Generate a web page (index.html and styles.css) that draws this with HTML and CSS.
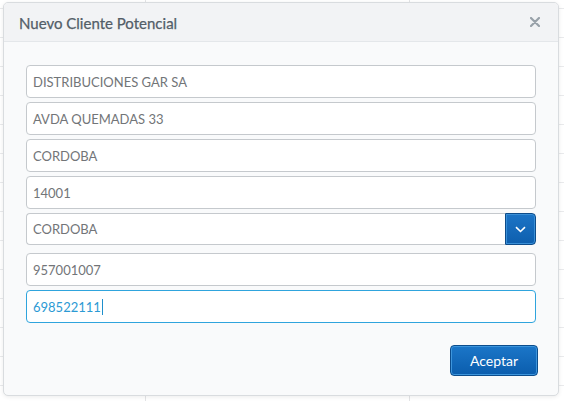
FILE: index.html
```html
<!DOCTYPE html>
<html lang="es">
<head>
<meta charset="utf-8">
<title>Nuevo Cliente Potencial</title>
<link rel="stylesheet" href="styles.css">
</head>
<body>
<div class="page">
  <div class="grid">
    <div class="row"><span class="c1"></span><span class="c2"></span><span class="c3"></span></div>
    <div class="row"><span class="c1"></span><span class="c2"></span><span class="c3"></span></div>
    <div class="row"><span class="c1"></span><span class="c2"></span><span class="c3"></span></div>
    <div class="row"><span class="c1"></span><span class="c2"></span><span class="c3"></span></div>
    <div class="row"><span class="c1"></span><span class="c2"></span><span class="c3"></span></div>
    <div class="row"><span class="c1"></span><span class="c2"></span><span class="c3"></span></div>
    <div class="row"><span class="c1"></span><span class="c2"></span><span class="c3"></span></div>
    <div class="row"><span class="c1"></span><span class="c2"></span><span class="c3"></span></div>
    <div class="row"><span class="c1"></span><span class="c2"></span><span class="c3"></span></div>
    <div class="row"><span class="c1"></span><span class="c2"></span><span class="c3"></span></div>
    <div class="row"><span class="c1"></span><span class="c2"></span><span class="c3"></span></div>
    <div class="row"><span class="c1"></span><span class="c2"></span><span class="c3"></span></div>
    <div class="row"><span class="c1"></span><span class="c2"></span><span class="c3"></span></div>
    <div class="row"><span class="c1"></span><span class="c2"></span><span class="c3"></span></div>
    <div class="row"><span class="c1"></span><span class="c2"></span><span class="c3"></span></div>
  </div>

  <div class="modal">
    <div class="modal-header">
      <h1 class="modal-title">Nuevo Cliente Potencial</h1>
      <button class="close" aria-label="Cerrar">
        <svg width="10" height="10" viewBox="0 0 10 10"><path d="M1 1 L9 9 M9 1 L1 9" stroke="#98a1a9" stroke-width="2.2" stroke-linecap="round"/></svg>
      </button>
    </div>
    <div class="modal-body">
      <div class="field">DISTRIBUCIONES GAR SA</div>
      <div class="field">AVDA QUEMADAS 33</div>
      <div class="field">CORDOBA</div>
      <div class="field">14001</div>
      <div class="select">
        <div class="select-text">CORDOBA</div>
        <div class="select-btn">
          <svg width="11" height="7" viewBox="0 0 11 7"><path d="M1 1.2 L5.5 5.5 L10 1.2" fill="none" stroke="#ffffff" stroke-width="1.6"/></svg>
        </div>
      </div>
      <div class="field">957001007</div>
      <div class="field focus">698522111<span class="caret"></span></div>
      <div class="footer">
        <button class="btn">Aceptar</button>
      </div>
    </div>
  </div>
</div>
</body>
</html>
```
FILE: styles.css
```css
html, body {
  margin: 0;
  padding: 0;
  background: #ffffff;
}
.page {
  position: relative;
  width: 564px;
  height: 401px;
  overflow: hidden;
  font-family: Lato, "Open Sans", sans-serif;
}
.grid {
  display: flex;
  flex-direction: column;
  margin-top: -20px;
}
.row {
  display: grid;
  grid-template-columns: 145px 264px 155px;
  height: 28px;
  border-bottom: 1px solid #e9eaec;
}
.row .c2, .row .c3 {
  border-left: 1px solid #e3e4e6;
}
.modal {
  position: absolute;
  left: 3px;
  top: 2px;
  width: 554px;
  height: 392px;
  border: 1px solid #d9dcdf;
  border-radius: 5px;
  background: #f9fafb;
  box-shadow: 0 1px 4px rgba(0,0,0,0.08);
  overflow: hidden;
  display: flex;
  flex-direction: column;
}
.modal-header {
  height: 38px;
  background: #f2f3f5;
  border-bottom: 1px solid #e4e7ea;
  display: flex;
  align-items: center;
  justify-content: space-between;
  padding: 0 18px 0 15px;
  flex-shrink: 0;
}
.modal-title {
  margin: 0;
  font-size: 15px;
  font-weight: 400;
  color: #535e68;
  padding-top: 2px;
  -webkit-text-stroke: 0.25px #535e68;
}
.close {
  border: 0;
  background: none;
  padding: 0;
  width: 10px;
  height: 10px;
  display: flex;
}
.modal-body {
  padding: 23px 22px 0 22px;
  display: flex;
  flex-direction: column;
  gap: 4px;
}
.field {
  height: 31px;
  border: 1px solid #c5c9cd;
  border-radius: 4px;
  background: #ffffff;
  display: flex;
  align-items: center;
  padding-left: 6px;
  font-size: 13px;
  color: #727578;
}
.field.focus {
  border-color: #2fa4dd;
  color: #2c9ad4;
}
.caret {
  display: inline-block;
  width: 1px;
  height: 16px;
  background: #1f8fcc;
  margin-left: 1px;
}
.select {
  height: 32px;
  display: flex;
  margin-bottom: 4px;
}
.select-text {
  flex: 1;
  border: 1px solid #c5c9cd;
  border-right: 0;
  border-radius: 4px 0 0 4px;
  background: #ffffff;
  display: flex;
  align-items: center;
  padding-left: 6px;
  font-size: 13px;
  color: #727578;
}
.select-btn {
  width: 29px;
  border: 1px solid #0d4c8a;
  border-radius: 0 4px 4px 0;
  background: linear-gradient(#1c74c6, #0e5fae);
  box-shadow: inset 0 0 0 1px #3a8fd6;
  display: flex;
  align-items: center;
  justify-content: center;
}
.footer {
  display: flex;
  justify-content: flex-end;
  margin-top: 18px;
  margin-right: -2px;
}
.btn {
  width: 88px;
  height: 31px;
  border: 1px solid #0c4d8c;
  border-radius: 4px;
  background: linear-gradient(#1b76c8, #0b5dad);
  box-shadow: inset 0 0 0 1px #3d95dc;
  color: #ffffff;
  font-family: Lato, "Open Sans", sans-serif;
  font-size: 14px;
  padding: 0;
}
```
